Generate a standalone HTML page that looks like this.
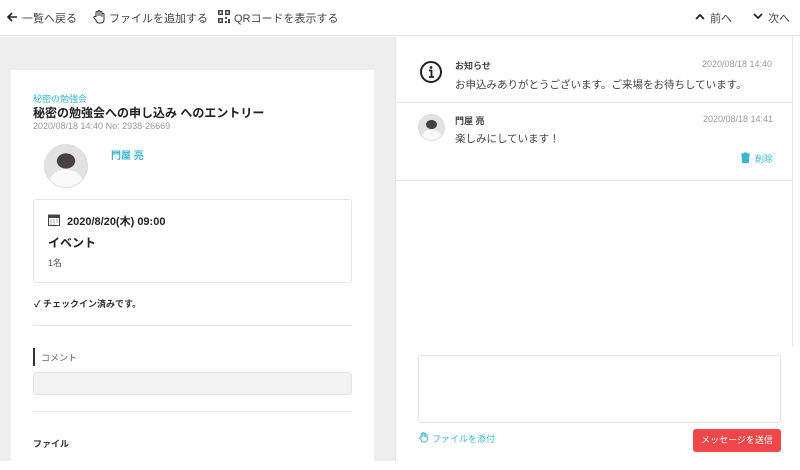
<!DOCTYPE html>
<html><head><meta charset="utf-8"><style>
*{margin:0;padding:0;box-sizing:border-box}
body{width:800px;height:461px;overflow:hidden;background:#fff;font-family:"Liberation Sans","Noto Sans CJK JP",sans-serif;color:#333;position:relative}
.a{position:absolute;white-space:nowrap}
.top{position:absolute;left:0;top:0;width:800px;height:36px;background:#fff;border-bottom:1px solid #e4e4e4}
.t{font-size:11px;color:#444}
</style></head><body>
<div class="top"></div>
<svg class="a" style="left:6px;top:11px" width="12" height="12" viewBox="0 0 12 12"><path d="M11 6H2M6 2L2 6l4 4" stroke="#222" stroke-width="1.6" fill="none"/></svg>
<div class="a t" style="left:22px;top:10px">一覧へ戻る</div>
<svg class="a" style="left:93px;top:10px" width="12" height="14" viewBox="0 0 12 14"><path d="M3 7V2.5a1 1 0 012 0V6V1.5a1 1 0 012 0V6V2.5a1 1 0 012 0V7V4.5a1 1 0 012 0V10a3 3 0 01-3 3H6a3 3 0 01-3-3L1 8a1 1 0 012-1" stroke="#333" stroke-width="1" fill="none"/></svg>
<div class="a t" style="left:109px;top:10px">ファイルを追加する</div>
<svg class="a" style="left:218px;top:10px" width="12" height="13" viewBox="0 0 12 13"><path d="M0 0h5v5H0zM7 0h5v5H7zM0 8h5v5H0zM7 7h2v2H7zM10 9h2v4h-2zM7 11h2v2H7z" fill="#444"/><path d="M1.5 1.5h2v2h-2zM8.5 1.5h2v2h-2zM1.5 9.5h2v2h-2z" fill="#fff"/></svg>
<div class="a t" style="left:234px;top:10px">QRコードを表示する</div>
<svg class="a" style="left:695px;top:13px" width="10" height="7" viewBox="0 0 10 7"><path d="M1 6l4-4 4 4" stroke="#222" stroke-width="1.7" fill="none"/></svg>
<div class="a t" style="left:710px;top:10px">前へ</div>
<svg class="a" style="left:753px;top:13px" width="10" height="7" viewBox="0 0 10 7"><path d="M1 1l4 4 4-4" stroke="#222" stroke-width="1.7" fill="none"/></svg>
<div class="a t" style="left:768px;top:10px">次へ</div>

<div class="a" style="left:0;top:37px;width:396px;height:424px;background:#eee"></div>
<div class="a" style="left:11px;top:70px;width:363px;height:400px;background:#fff"></div>
<div class="a" style="left:33px;top:92px;font-size:9px;color:#3cb6cf">秘密の勉強会</div>
<div class="a" style="left:33px;top:104px;font-size:12px;font-weight:bold;color:#222">秘密の勉強会への申し込み へのエントリー</div>
<div class="a" style="left:33px;top:121px;font-size:9px;color:#999">2020/08/18 14:40 No: 2938-26669</div>
<div class="a" style="left:44px;top:144px;width:44px;height:44px;border-radius:50%;background:radial-gradient(ellipse 30% 25% at 50% 38%,#4a4040 0,#4a4040 70%,transparent 75%),radial-gradient(ellipse 45% 40% at 50% 95%,#fafafa 0,#fafafa 90%,transparent 95%),#e2e2e2;border:1px solid #ddd"></div>
<div class="a" style="left:111px;top:147px;font-size:10px;font-weight:bold;color:#3cb6cf">門屋 亮</div>
<div class="a" style="left:33px;top:199px;width:319px;height:84px;border:1px solid #e6e6e6;border-radius:3px"></div>
<svg class="a" style="left:48px;top:214px" width="12" height="12" viewBox="0 0 12 12"><rect x="0.5" y="1" width="11" height="10.5" fill="#fff" stroke="#444"/><rect x="0.5" y="1" width="11" height="3" fill="#444"/><path d="M2.5 6h1M5.5 6h1M8.5 6h1M2.5 8h1M5.5 8h1M8.5 8h1M2.5 10h1M5.5 10h1" stroke="#666"/></svg>
<div class="a" style="left:67px;top:213px;font-size:11px;font-weight:bold;color:#222">2020/8/20(木) 09:00</div>
<div class="a" style="left:48px;top:234px;font-size:12px;font-weight:bold;color:#222">イベント</div>
<div class="a" style="left:48px;top:256px;font-size:9px;color:#555">1名</div>
<div class="a" style="left:34px;top:297px;font-size:9px;font-weight:bold;color:#333">✓ チェックイン済みです。</div>
<div class="a" style="left:33px;top:325px;width:319px;height:1px;background:#eaeaea"></div>
<div class="a" style="left:33px;top:348px;width:2px;height:18px;background:#333"></div>
<div class="a" style="left:41px;top:351px;font-size:9px;color:#666">コメント</div>
<div class="a" style="left:33px;top:372px;width:319px;height:23px;background:#f3f3f3;border:1px solid #e3e3e3;border-radius:3px"></div>
<div class="a" style="left:33px;top:411px;width:319px;height:1px;background:#eaeaea"></div>
<div class="a" style="left:33px;top:437px;font-size:9px;font-weight:bold;color:#333">ファイル</div>

<div class="a" style="left:395px;top:37px;width:1px;height:424px;background:#e4e4e4"></div>
<div class="a" style="left:792px;top:37px;width:1px;height:310px;background:#e8e8e8"></div>
<svg class="a" style="left:419px;top:60px" width="24" height="24" viewBox="0 0 24 24"><circle cx="12" cy="12" r="10" stroke="#222" stroke-width="2" fill="none"/><circle cx="12" cy="7.5" r="1.4" fill="#222"/><path d="M10 10.5h2.5V17M10 17h5" stroke="#222" stroke-width="1.8" fill="none"/></svg>
<div class="a" style="left:455px;top:59px;font-size:9px;font-weight:bold;color:#444">お知らせ</div>
<div class="a" style="left:702px;top:59px;font-size:9px;color:#999">2020/08/18 14:40</div>
<div class="a" style="left:455px;top:77px;font-size:10.5px;color:#444">お申込みありがとうございます。ご来場をお待ちしています。</div>
<div class="a" style="left:396px;top:102px;width:396px;height:1px;background:#e4e4e4"></div>
<div class="a" style="left:418px;top:114px;width:27px;height:27px;border-radius:50%;background:radial-gradient(ellipse 30% 25% at 50% 38%,#4a4040 0,#4a4040 70%,transparent 75%),radial-gradient(ellipse 45% 40% at 50% 95%,#fafafa 0,#fafafa 90%,transparent 95%),#e2e2e2;border:1px solid #ddd"></div>
<div class="a" style="left:455px;top:114px;font-size:9px;font-weight:bold;color:#444">門屋 亮</div>
<div class="a" style="left:703px;top:114px;font-size:9px;color:#999">2020/08/18 14:41</div>
<div class="a" style="left:455px;top:131px;font-size:10.5px;color:#444">楽しみにしています！</div>
<svg class="a" style="left:741px;top:152px" width="9" height="11" viewBox="0 0 9 11"><path d="M0 2h9M3 2V1h3v1M1 3l.6 7.5h5.8L8 3z" stroke="#3cb6cf" fill="#3cb6cf" stroke-width="1"/></svg>
<div class="a" style="left:755px;top:152px;font-size:9px;color:#3cb6cf">削除</div>
<div class="a" style="left:396px;top:180px;width:396px;height:1px;background:#e4e4e4"></div>
<div class="a" style="left:418px;top:355px;width:363px;height:68px;border:1px solid #e3e3e3;border-radius:3px"></div>
<svg class="a" style="left:419px;top:432px" width="9" height="11" viewBox="0 0 12 14"><path d="M3 7V2.5a1 1 0 012 0V6V1.5a1 1 0 012 0V6V2.5a1 1 0 012 0V7V4.5a1 1 0 012 0V10a3 3 0 01-3 3H6a3 3 0 01-3-3L1 8a1 1 0 012-1" stroke="#3cb6cf" stroke-width="1.3" fill="none"/></svg>
<div class="a" style="left:432px;top:432px;font-size:9px;color:#3cb6cf">ファイルを添付</div>
<div class="a" style="left:693px;top:429px;width:88px;height:23px;background:#f1474a;border-radius:3px;color:#fff;font-size:9px;text-align:center;line-height:23px">メッセージを送信</div>
</body></html>
